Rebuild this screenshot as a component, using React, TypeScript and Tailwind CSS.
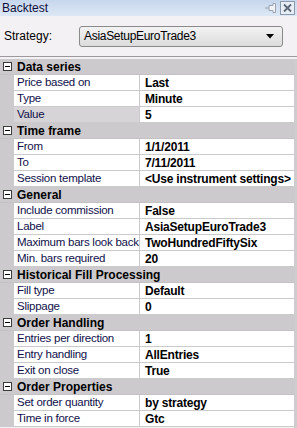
type Row = { label: string; value: string; selected?: boolean };
type Group = { title: string; rows: Row[] };

const groups: Group[] = [
  {
    title: "Data series",
    rows: [
      { label: "Price based on", value: "Last" },
      { label: "Type", value: "Minute" },
      { label: "Value", value: "5", selected: true },
    ],
  },
  {
    title: "Time frame",
    rows: [
      { label: "From", value: "1/1/2011" },
      { label: "To", value: "7/11/2011" },
      { label: "Session template", value: "<Use instrument settings>" },
    ],
  },
  {
    title: "General",
    rows: [
      { label: "Include commission", value: "False" },
      { label: "Label", value: "AsiaSetupEuroTrade3" },
      { label: "Maximum bars look back", value: "TwoHundredFiftySix" },
      { label: "Min. bars required", value: "20" },
    ],
  },
  {
    title: "Historical Fill Processing",
    rows: [
      { label: "Fill type", value: "Default" },
      { label: "Slippage", value: "0" },
    ],
  },
  {
    title: "Order Handling",
    rows: [
      { label: "Entries per direction", value: "1" },
      { label: "Entry handling", value: "AllEntries" },
      { label: "Exit on close", value: "True" },
    ],
  },
  {
    title: "Order Properties",
    rows: [
      { label: "Set order quantity", value: "by strategy" },
      { label: "Time in force", value: "Gtc" },
    ],
  },
];

function Minus() {
  return (
    <div className="w-[9px] h-[9px] border border-[#3c3c3c] bg-white flex items-center justify-center">
      <div className="w-[5px] h-px bg-black"></div>
    </div>
  );
}

export default function App() {
  return (
    <main
      className="w-[297px] h-[428px] overflow-hidden flex flex-col bg-[#f4f1f4] text-[11px] text-black"
      style={{ fontFamily: '"Liberation Sans", Arial, sans-serif' }}
    >
      <header className="h-4 flex items-center justify-between pl-[2px] pr-[2px] bg-gradient-to-b from-[#c6d6ec] to-[#dde8f5]">
        <span className="text-[12px] text-[#10103a] leading-none">Backtest</span>
        <div className="flex items-center gap-[2px]">
          <svg width="13" height="12" viewBox="0 0 13 12">
            <line x1="0" y1="6" x2="4" y2="6" stroke="#9aa4b0" />
            <path d="M4 3.5 L8 3.5 L8 1.5 L10.5 1.5 L10.5 10.5 L8 10.5 L8 8.5 L4 8.5 Z" fill="#f0f2f5" stroke="#9aa4b0" />
          </svg>
          <svg width="15" height="14" viewBox="0 0 15 14">
            <rect x="0.5" y="0.5" width="14" height="13" fill="#e8eef6" stroke="#8c99aa" />
            <path d="M4 3.5 L11 10.5 M11 3.5 L4 10.5" stroke="#5d6876" strokeWidth="1.8" />
          </svg>
        </div>
      </header>

      <section className="h-[41px] flex items-center pl-1 pr-[14px] border-b border-[#9c9a9c]">
        <span className="w-[75px] text-[12px]">Strategy:</span>
        <div className="flex-1 h-[21px] flex items-center justify-between pl-[4px] pr-[8px] rounded-[3px] border border-[#8a8a8a] bg-gradient-to-b from-[#f3f3f3] to-[#dcdcdc]">
          <span className="text-[12px] tracking-[-0.3px]">AsiaSetupEuroTrade3</span>
          <svg width="8" height="5" viewBox="0 0 8 5">
            <path d="M0 0 L8 0 L4 4.5 Z" fill="#000" />
          </svg>
        </div>
      </section>

      <section className="flex-1 mt-[2px] border-r-[3px] border-r-[#cfcccf] flex flex-col">
        {groups.map((g) => (
          <div key={g.title} className="flex flex-col">
            <div className="h-4 flex items-center bg-[#cdcacd] border-b border-[#c4c1c4]">
              <div className="w-[14px] flex justify-center">
                <Minus />
              </div>
              <span className="pl-[3px] text-[12px] font-bold whitespace-nowrap">{g.title}</span>
            </div>
            {g.rows.map((r) => (
              <div key={r.label} className="h-4 flex bg-[#cdcacd]">
                <div className="w-[14px]"></div>
                <div
                  className={
                    "w-[126px] pl-[3px] flex items-center overflow-hidden whitespace-nowrap border-b border-r border-[#cdcacd] text-[11.5px] tracking-[-0.25px] text-[#10104a] " +
                    (r.selected ? "bg-[#d7d4d7]" : "bg-white")
                  }
                >
                  {r.label}
                </div>
                <div className="flex-1 pl-[5px] flex items-center overflow-hidden whitespace-nowrap bg-white border-b border-[#cdcacd] text-[12px] font-bold tracking-[-0.2px]">
                  {r.value}
                </div>
              </div>
            ))}
          </div>
        ))}
      </section>
    </main>
  );
}
